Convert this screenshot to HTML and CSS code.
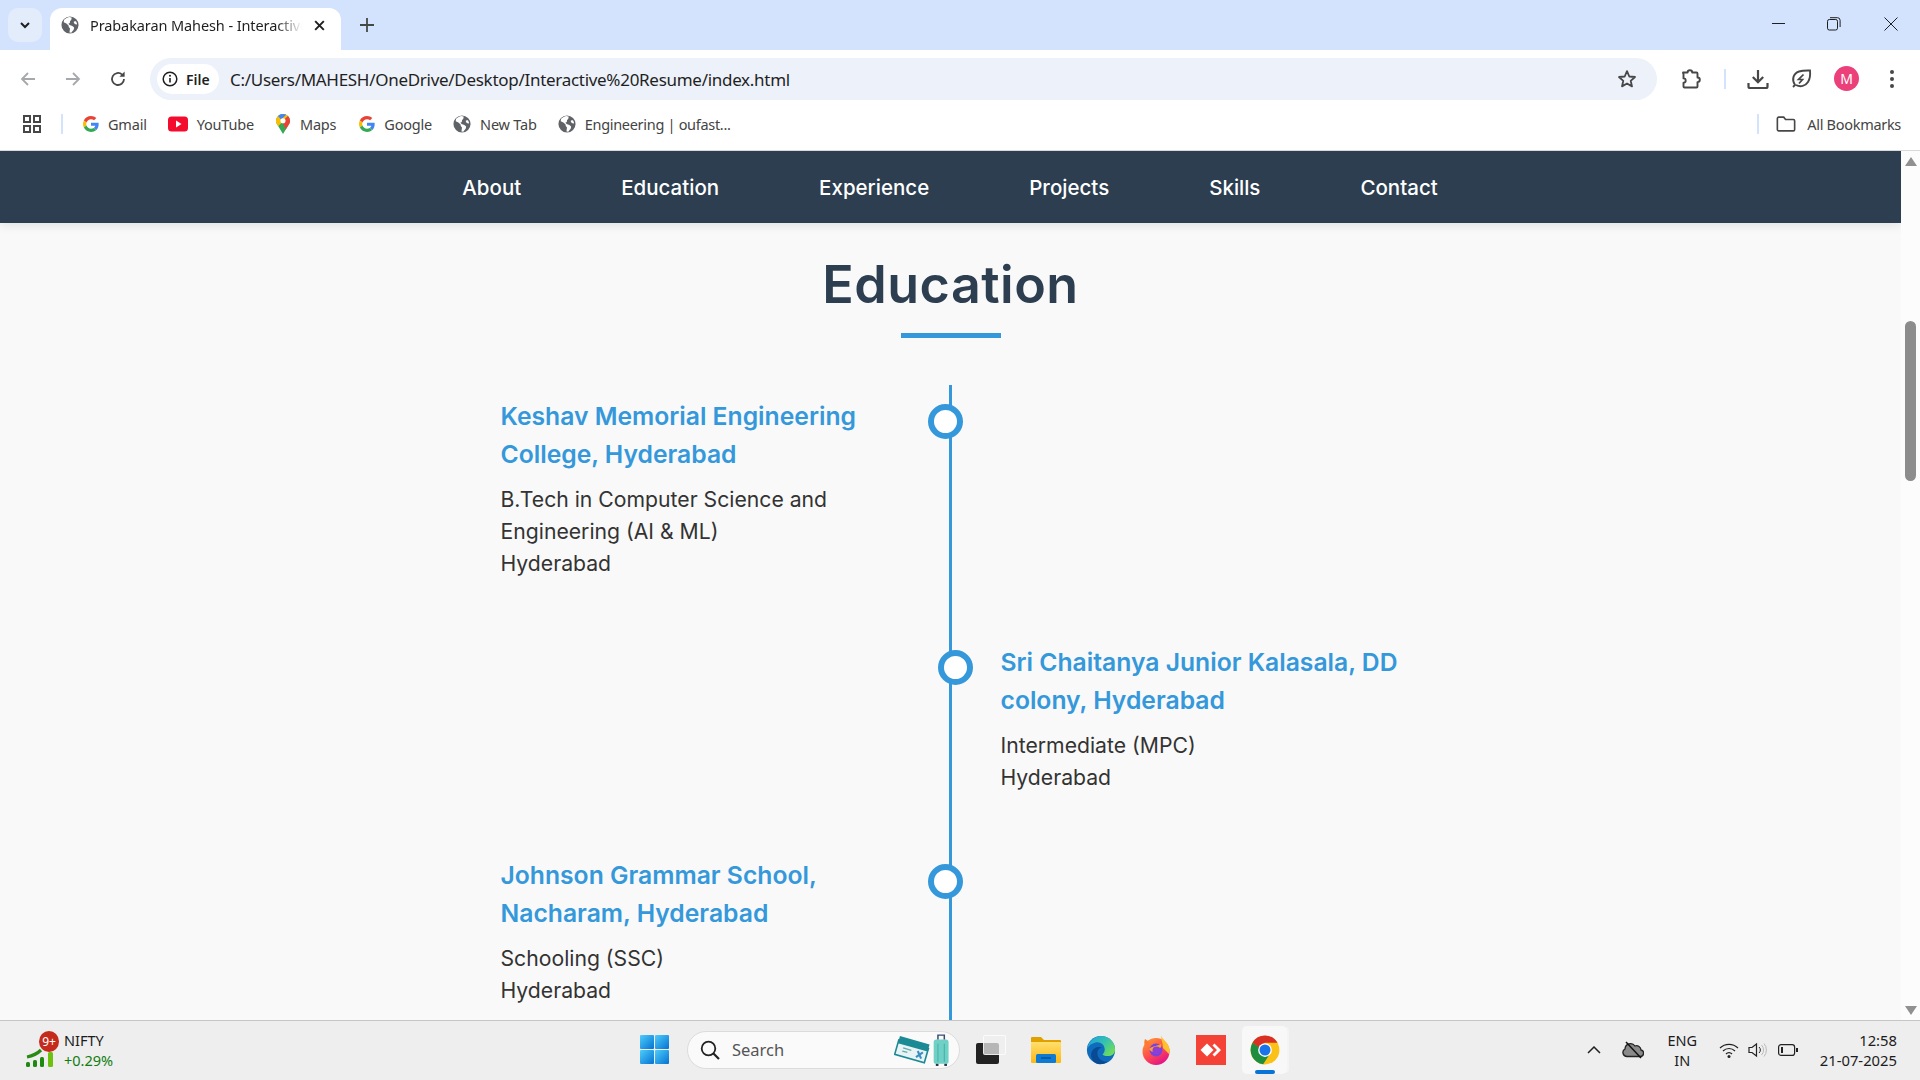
FILE: index.html
```html
<!DOCTYPE html>
<html lang="en">
<head>
<meta charset="utf-8">
<title>Prabakaran Mahesh - Interactive Resume</title>
<link rel="stylesheet" href="styles.css">
</head>
<body>
<svg class="defs" width="0" height="0" aria-hidden="true">
  <defs>
    <symbol id="globe" viewBox="0 0 20 20">
      <circle cx="10" cy="10" r="9.5" fill="#5f6368"/>
      <path d="M9 1.2 6.2 2.2 3.4 4.2 3 7l3 1.2 2.4 2.3.2 1.8 1.4 1.5-.6 4.6 2 .3 2.8-3.6.4-2.2-2-1.8-3-1-1.4-1.4 1.6-1 .2-1.8L11.6 4l.2-2.4z" fill="#fff"/>
      <path d="M15.6 5.6l-1.6 1.2.8 1.6 2.2 1.4.8-1.2-.8-2.2z" fill="#fff"/>
    </symbol>
    <symbol id="gicon" viewBox="0 0 48 48">
      <path fill="#EA4335" d="M24 9.5c3.54 0 6.71 1.22 9.21 3.6l6.85-6.85C35.9 2.38 30.47 0 24 0 14.62 0 6.51 5.38 2.56 13.22l7.98 6.19C12.43 13.72 17.74 9.5 24 9.5z"/>
      <path fill="#4285F4" d="M46.98 24.55c0-1.57-.15-3.09-.38-4.55H24v9.02h12.94c-.58 2.96-2.26 5.48-4.78 7.18l7.73 6c4.51-4.18 7.09-10.36 7.09-17.65z"/>
      <path fill="#FBBC05" d="M10.53 28.59c-.48-1.45-.76-2.99-.76-4.59s.27-3.14.76-4.59l-7.98-6.19C.92 16.46 0 20.12 0 24c0 3.88.92 7.54 2.56 10.78l7.97-6.19z"/>
      <path fill="#34A853" d="M24 48c6.48 0 11.93-2.13 15.89-5.81l-7.73-6c-2.15 1.45-4.92 2.3-8.16 2.3-6.26 0-11.57-4.22-13.47-9.91l-7.98 6.19C6.51 42.62 14.62 48 24 48z"/>
    </symbol>
    <symbol id="chrome" viewBox="0 0 48 48">
      <circle cx="24" cy="24" r="23" fill="#fbc116"/>
      <path d="M4 12.500 24 24l6 9-9 13.800A23 23 0 0 1 4 12.500z" fill="#1e8e3e"/>
      <path d="M4 12.500A23 23 0 0 1 44 12.500H24L14 19z" fill="#d93025"/>
      <circle cx="24" cy="24" r="11" fill="#fff"/>
      <circle cx="24" cy="24" r="8.800" fill="#1a73e8"/>
    </symbol>
    <linearGradient id="edgeTop" x1="0" y1="0" x2="1" y2=".7">
      <stop offset="0" stop-color="#1b9de2"/><stop offset=".55" stop-color="#35c1b1"/><stop offset="1" stop-color="#6fdc5c"/>
    </linearGradient>
    <linearGradient id="winBlue" x1="0" y1="0" x2="1" y2="1">
      <stop offset="0" stop-color="#4fcdfb"/><stop offset="1" stop-color="#0472d2"/>
    </linearGradient>
    <linearGradient id="foxOuter" x1="0" y1="0" x2=".6" y2="1">
      <stop offset="0" stop-color="#ffa42a"/><stop offset=".6" stop-color="#ff4a4f"/><stop offset="1" stop-color="#e31587"/>
    </linearGradient>
    <linearGradient id="folderFill" x1="0" y1="0" x2="0" y2="1">
      <stop offset="0" stop-color="#ffdf6e"/><stop offset="1" stop-color="#fdb813"/>
    </linearGradient>
  </defs>
</svg>

<header class="tabstrip">
  <div class="tabsearch">
    <svg class="ico12" viewBox="0 0 12 12"><path d="M2 4l4 4 4-4" fill="none" stroke="#1f1f1f" stroke-width="2"/></svg>
  </div>
  <div class="tab">
    <svg class="ico18"><use href="#globe"/></svg>
    <span class="tab-title">Prabakaran Mahesh - Interactive</span>
    <svg class="ico12 tab-close" viewBox="0 0 12 12"><path d="M2 2l8 8M10 2l-8 8" stroke="#1f1f1f" stroke-width="1.8"/></svg>
  </div>
  <svg class="newtab" viewBox="0 0 14 14"><path d="M7 0v14M0 7h14" stroke="#444746" stroke-width="1.8"/></svg>
  <div class="winctl">
    <svg class="wc" viewBox="0 0 14 14"><path d="M0 6.5h13" stroke="#1f1f1f" stroke-width="1"/></svg>
    <svg class="wc" viewBox="0 0 14 14"><rect x=".5" y="2.5" width="10" height="10.5" rx="1.8" fill="none" stroke="#1f1f1f"/><path d="M3 .7h7.5a2.6 2.6 0 0 1 2.6 2.6V10" fill="none" stroke="#1f1f1f"/></svg>
    <svg class="wc" viewBox="0 0 14 14"><path d="M.5.5l13 13M13.5.5l-13 13" stroke="#1f1f1f" stroke-width="1"/></svg>
  </div>
</header>

<div class="toolbar">
  <div class="navbtns">
    <svg class="ico18" viewBox="0 0 18 18"><path d="M16 9H3M9 3 3 9l6 6" fill="none" stroke="#a6a8ab" stroke-width="1.8"/></svg>
    <svg class="ico18" viewBox="0 0 18 18"><path d="M2 9h13M9 3l6 6-6 6" fill="none" stroke="#a6a8ab" stroke-width="1.8"/></svg>
    <svg class="ico18" viewBox="0 0 18 18"><path d="M15 9a6 6 0 1 1-1.9-4.4" fill="none" stroke="#474747" stroke-width="1.8"/><path d="M15.6 1.6v5.2h-5.2z" fill="#474747"/></svg>
  </div>
  <div class="omnibox">
    <div class="chip">
      <svg class="ico16" viewBox="0 0 16 16"><circle cx="8" cy="8" r="6.8" fill="none" stroke="#1f1f1f" stroke-width="1.5"/><path d="M8 7v4.4" stroke="#1f1f1f" stroke-width="1.6"/><circle cx="8" cy="4.7" r="1" fill="#1f1f1f"/></svg>
      <span>File</span>
    </div>
    <span class="url">C:/Users/MAHESH/OneDrive/Desktop/Interactive%20Resume/index.html</span>
    <svg class="ico20 star" viewBox="0 0 20 20"><path d="M10 2.2l2.3 5.3 5.7.5-4.3 3.8 1.3 5.6L10 14.5l-5 2.9 1.3-5.6L2 8l5.7-.5z" fill="none" stroke="#474747" stroke-width="1.8" stroke-linejoin="round"/></svg>
  </div>
  <div class="tools">
    <svg class="ico22 puzzle" viewBox="0 0 22 22"><path d="M3 4.5h4.6a2.3 2.3 0 0 1 4.6 0h4.3a1 1 0 0 1 1 1v4a2.3 2.3 0 0 1 0 4.6v4.4a1 1 0 0 1-1 1H4.5a1 1 0 0 1-1-1v-3.700a2.200 2.200 0 0 0 0-4.400V5.500a1 1 0 0 1-.5-1z" fill="none" stroke="#474747" stroke-width="1.9" stroke-linejoin="round"/></svg>
    <span class="vsep"></span>
    <svg class="ico22 dl" viewBox="0 0 22 22"><path d="M11 2v12M5.800 9 11 14.200 16.200 9" fill="none" stroke="#474747" stroke-width="2.200"/><path d="M1.500 15v3.500a1.500 1.500 0 0 0 1.500 1.500h16a1.500 1.500 0 0 0 1.500-1.500V15" fill="none" stroke="#474747" stroke-width="2.200"/></svg>
    <svg class="ico22 leaf" viewBox="0 0 22 22"><path d="M3 19c1-1 1.500-1.500 2-2C1.500 12 3 5.500 9 3.500c4-1.300 9-1 11-1 .3 3 .3 8-2 11.500-2.500 4-7.500 5.500-12 3" fill="none" stroke="#474747" stroke-width="1.900"/><path d="M13.500 6.500 8.500 11.500h4l-3.500 4" fill="none" stroke="#474747" stroke-width="1.700"/></svg>
    <span class="avatar">M</span>
    <svg class="ico22 dots" viewBox="0 0 22 22"><circle cx="11" cy="4" r="2" fill="#474747"/><circle cx="11" cy="11" r="2" fill="#474747"/><circle cx="11" cy="18" r="2" fill="#474747"/></svg>
  </div>
</div>

<nav class="bookmarks">
  <svg class="ico20 apps" viewBox="0 0 20 20"><g fill="none" stroke="#474747" stroke-width="2"><rect x="2" y="2" width="6" height="6"/><rect x="12" y="2" width="6" height="6"/><rect x="2" y="12" width="6" height="6"/><rect x="12" y="12" width="6" height="6"/></g></svg>
  <span class="vsep bm-sep"></span>
  <a class="bm"><svg class="ico16"><use href="#gicon"/></svg>Gmail</a>
  <a class="bm"><svg class="ico20" viewBox="0 0 20 20"><rect y="2.500" width="20" height="15" rx="3.500" fill="#f40c2f"/><path d="M8 6.500v7l5.500-3.500z" fill="#fff"/></svg>YouTube</a>
  <a class="bm bm-maps"><svg class="pin" viewBox="0 0 16 24"><path d="M8 1a7.500 7.500 0 0 1 6 12L8 23 2 13A7.500 7.500 0 0 1 8 1z" fill="#34a853"/><path d="M8 1a7.500 7.500 0 0 1 5.500 2.400L2.800 14.500 2 13A7.500 7.500 0 0 1 2.500 3.400z" fill="#fbbc04"/><path d="M8 1a7.500 7.500 0 0 0-5.500 2.400L6 7l5.500-5.200A7.500 7.500 0 0 0 8 1z" fill="#4285f4"/><path d="M13.500 3.400A7.500 7.500 0 0 1 14 13l-3 5-4-9z" fill="#ea4335"/><circle cx="8" cy="8.500" r="2.800" fill="#fff"/></svg>Maps</a>
  <a class="bm"><svg class="ico16"><use href="#gicon"/></svg>Google</a>
  <a class="bm"><svg class="ico18"><use href="#globe"/></svg>New Tab</a>
  <a class="bm eng"><svg class="ico18"><use href="#globe"/></svg>Engineering | oufast...</a>
  <span class="vsep bm-sep right"></span>
  <a class="bm all"><svg class="ico20 folder" viewBox="0 0 22 18"><path d="M1.500 3a1.500 1.500 0 0 1 1.500-1.500h5.500L10.500 4h8.500a1.500 1.500 0 0 1 1.500 1.500V15a1.500 1.500 0 0 1-1.500 1.500H3A1.500 1.500 0 0 1 1.500 15z" fill="none" stroke="#474747" stroke-width="1.800"/></svg>All Bookmarks</a>
</nav>

<div class="viewport">
  <main class="page">
    <div class="sitenav">
      <a>About</a><a>Education</a><a>Experience</a><a>Projects</a><a>Skills</a><a>Contact</a>
    </div>
    <section class="education">
      <h1 class="heading">Education</h1>
      <div class="underline"></div>
      <div class="timeline">
        <article class="item left first">
          <span class="dot"></span>
          <h2>Keshav Memorial Engineering<br>College, Hyderabad</h2>
          <p>B.Tech in Computer Science and<br>Engineering (AI &amp; ML)<br>Hyderabad</p>
        </article>
        <article class="item right">
          <span class="dot"></span>
          <h2>Sri Chaitanya Junior Kalasala, DD<br>colony, Hyderabad</h2>
          <p>Intermediate (MPC)<br>Hyderabad</p>
        </article>
        <article class="item left last">
          <span class="dot"></span>
          <h2>Johnson Grammar School,<br>Nacharam, Hyderabad</h2>
          <p>Schooling (SSC)<br>Hyderabad</p>
        </article>
      </div>
    </section>
  </main>
  <div class="scrollbar">
    <span class="arrow up"></span>
    <span class="thumb"></span>
    <span class="arrow down"></span>
  </div>
</div>

<footer class="taskbar">
  <div class="widget">
    <span class="widget-ico">
      <svg class="nifty" viewBox="0 0 28 36"><path d="M1 25c5-1 10-3 14-7" fill="none" stroke="#2a8a14" stroke-width="3.200"/><g fill="#1f8a10"><rect x="0" y="30" width="4" height="5" rx="1.500"/><rect x="7" y="28" width="4" height="7" rx="1.500"/><rect x="14" y="25" width="4" height="10" rx="1.500"/></g><rect x="22" y="20" width="5" height="15" rx="1.500" fill="#6cc20f"/></svg>
      <span class="badge">9+</span>
    </span>
    <div class="widget-text"><span>NIFTY</span><span class="up">+0.29%</span></div>
  </div>
  <div class="center">
    <svg class="winlogo" viewBox="0 0 29 29"><g fill="url(#winBlue)"><rect width="14" height="14" rx="1"/><rect x="15" width="14" height="14" rx="1"/><rect y="15" width="14" height="14" rx="1"/><rect x="15" y="15" width="14" height="14" rx="1"/></g></svg>
    <div class="search">
      <svg class="ico20" viewBox="0 0 20 20"><circle cx="8.500" cy="8.500" r="6.800" fill="none" stroke="#222" stroke-width="1.800"/><path d="M13.500 13.500 19 19" stroke="#222" stroke-width="2.200"/></svg>
      <span class="search-text">Search</span>
      <svg class="travel" viewBox="0 0 52 32"><g transform="rotate(16 15 16)"><rect x="2" y="6" width="29" height="12" fill="#1a8a94"/><rect x="2" y="10" width="29" height="14" fill="#e8f3f5" stroke="#1a8a94" stroke-width="1.500"/><rect x="2" y="10" width="29" height="3" fill="#1a8a94"/><path d="M8 16h8M8 19h5" stroke="#6aa" stroke-width="1.200"/><path d="M22 15l5 6M27 15l-5 6" stroke="#3b8fbf" stroke-width="2"/></g><rect x="37" y="6" width="14" height="23" rx="2.500" fill="#6fd0c6"/><path d="M41 6V2h6v4" fill="none" stroke="#3a4a70" stroke-width="1.400"/><path d="M41 10v17M47 10v17" stroke="#48b0a8"/><rect x="39" y="29" width="2.500" height="2" fill="#234"/><rect x="47" y="29" width="2.500" height="2" fill="#234"/></svg>
    </div>
    <span class="taskview"><span class="tv-back"></span><span class="tv-front"></span></span>
    <svg class="app" viewBox="0 0 30 30"><path d="M0 3a1 1 0 0 1 1-1h9l3 3h16a1 1 0 0 1 1 1v4H0z" fill="#e0a000"/><path d="M0 7h29a1 1 0 0 1 1 1v19a1 1 0 0 1-1 1H1a1 1 0 0 1-1-1z" fill="url(#folderFill)"/><rect x="5" y="19" width="20" height="9" rx="1.500" fill="#0f7ad1"/><path d="M10 23h10" stroke="#0a4f99" stroke-width="1.400"/></svg>
    <svg class="app" viewBox="0 0 32 32"><circle cx="16" cy="16" r="15" fill="#0f6cbd"/><path d="M1.500 14C3 6.500 9 1 16 1c9 0 15 7 15 14.500 0 4.700-3.500 7-8 7-3 0-5-1-5.300-2 1.200-1 2.300-2.500 2.300-5 0-5.500-5-8.700-10-7.500-4 1-6.700 3-8.500 6z" fill="url(#edgeTop)"/><path d="M13 31c-6-1.500-9-8-7-13 2-4.500 7-6.500 11-4.500-4 .5-5.500 4-4.500 8 1 4.500 6 7.500 11 6.500-3 2.500-6.500 3.800-10.500 3z" fill="#0a4a94"/></svg>
    <svg class="app" viewBox="0 0 30 30"><circle cx="15" cy="16.500" r="13.500" fill="url(#foxOuter)"/><path d="M20 0c1 4 5 6 7 10 2 3 2 6 1 9l-6-6C22 8 20 5 20 0z" fill="#ffc22e"/><path d="M4 4c-1 2-1 5 0 7l5-2C8 7 6 5 4 4z" fill="#ff7a2f"/><circle cx="15" cy="15" r="6.500" fill="#7542e5"/><path d="M8 14c3-3 8-3 12-5 1 3-1 5-4 5 2 0 2 2 0 3-4 1-7-1-8-3z" fill="#ff9a2e"/><circle cx="15.500" cy="15.500" r="4" fill="#8c3fd1"/></svg>
    <svg class="app" viewBox="0 0 30 30"><rect width="30" height="30" fill="#f44336"/><path d="M11 8.500 17.500 15 11 21.500 4.500 15z" fill="#fff"/><path d="M18.500 8.500 25 15l-6.500 6.500-2-2L21 15l-4.500-4.500z" fill="#fff"/></svg>
    <span class="active-app">
      <svg class="app"><use href="#chrome"/></svg>
      <span class="indicator"></span>
    </span>
  </div>
  <div class="tray">
    <svg class="caret" viewBox="0 0 14 8"><path d="M1 7l6-6 6 6" fill="none" stroke="#222" stroke-width="1.500"/></svg>
    <svg class="ico20 cloud" viewBox="0 0 22 18"><path d="M5 15.500A4 4 0 0 1 3 8a5.500 5.500 0 0 1 10-3 4.500 4.500 0 0 1 6 4 3.300 3.300 0 0 1-1 6.500z" fill="#8a8a8a" stroke="#222" stroke-width="1.300"/><path d="M4 1l15 16" stroke="#111" stroke-width="1.500"/></svg>
    <div class="lang"><span>ENG</span><span>IN</span></div>
    <svg class="ico20 wifi" viewBox="0 0 20 16"><g fill="none" stroke="#222" stroke-width="1.200"><path d="M1 6a13 13 0 0 1 18 0"/><path d="M4 9a8.500 8.500 0 0 1 12 0"/><path d="M7 12a4 4 0 0 1 6 0"/></g><circle cx="10" cy="14.500" r="1.500" fill="#222"/></svg>
    <svg class="ico20 vol" viewBox="0 0 20 16"><path d="M1 5.500h3L8.500 2v12L4 10.500H1z" fill="none" stroke="#222" stroke-width="1.200"/><path d="M11 5a4 4 0 0 1 0 6" fill="none" stroke="#222"/><path d="M13.500 3a7 7 0 0 1 0 10M16 1.500a10 10 0 0 1 0 13" fill="none" stroke="#bbb"/></svg>
    <svg class="ico20 batt" viewBox="0 0 20 12"><rect x=".6" y=".6" width="16" height="10.800" rx="2.500" fill="none" stroke="#222" stroke-width="1.200"/><rect x="3" y="3" width="2" height="6" fill="#222"/><rect x="18" y="4" width="2" height="4" fill="#222"/></svg>
    <div class="clock"><span>12:58</span><span>21-07-2025</span></div>
  </div>
</footer>
</body>
</html>
```
FILE: styles.css
```css
* { box-sizing: border-box; }
html, body { margin: 0; height: 100%; overflow: hidden; }
body {
  display: flex;
  flex-direction: column;
  height: 100vh;
  font-family: "Noto Sans", "Open Sans", sans-serif;
  color: #1f1f1f;
  background: #fff;
}
.defs { position: absolute; }
svg { flex: none; display: block; }
.ico12 { width: 12px; height: 12px; }
.ico16 { width: 16px; height: 16px; }
.ico18 { width: 18px; height: 18px; }
.ico20 { width: 20px; height: 20px; }
.ico22 { width: 22px; height: 22px; }

/* tab strip */
.tabstrip {
  height: 50px;
  flex: none;
  background: #d3e3fd;
  display: flex;
  align-items: flex-end;
  padding-left: 8px;
}
.tabsearch {
  width: 34px;
  height: 34px;
  margin-bottom: 8px;
  border-radius: 10px;
  background: #e3ecfb;
  display: flex;
  align-items: center;
  justify-content: center;
}
.tab {
  width: 291px;
  height: 42px;
  margin-left: 8px;
  background: #fff;
  border-radius: 12px 12px 0 0;
  display: flex;
  align-items: center;
  padding: 0 15px 8px 11px;
  gap: 11px;
}
.tab-title {
  flex: 1;
  min-width: 0;
  white-space: nowrap;
  font-size: 14.5px;
  letter-spacing: -.1px;
  -webkit-mask-image: linear-gradient(to right, #000 88%, transparent);
  mask-image: linear-gradient(to right, #000 88%, transparent);
}
.tab-close { width: 13px; height: 13px; }
.newtab { width: 14px; height: 14px; margin: 0 0 18px 19px; }
.winctl {
  margin-left: auto;
  display: flex;
  align-items: center;
  gap: 43px;
  padding: 0 22px 19px 0;
}
.wc { width: 14px; height: 14px; }
.wc:first-child { margin-right: -2px; }

/* toolbar */
.toolbar {
  height: 50px;
  flex: none;
  display: flex;
  align-items: flex-start;
  padding: 8px 0 0 19px;
}
.navbtns {
  display: flex;
  gap: 27px;
  padding-top: 12px;
  width: 131px;
}
.omnibox {
  width: 1507px;
  height: 42px;
  background: #ecf1fa;
  border-radius: 21px;
  display: flex;
  align-items: center;
  padding: 0 20px 0 7px;
}
.chip {
  width: 62px;
  height: 30px;
  background: #fff;
  border-radius: 15px;
  display: flex;
  align-items: center;
  gap: 8px;
  padding-left: 5px;
  font-size: 14px;
  font-weight: 600;
}
.url {
  margin-left: 11px;
  flex: 1;
  font-size: 17px;
  letter-spacing: -.29px;
  white-space: nowrap;
}
.tools {
  display: flex;
  align-items: center;
  height: 42px;
  padding-left: 23px;
}
.vsep {
  display: block;
  width: 2px;
  height: 20px;
  background: #d3e3fd;
  flex: none;
}
.tools .vsep { margin: 0 21px 0 22px; }
.leaf { margin-left: 21px; }
.avatar {
  width: 25px;
  height: 25px;
  margin: 0 0 2px 22px;
  border-radius: 50%;
  background: #ec407a;
  color: #fff;
  font-size: 14px;
  display: flex;
  align-items: center;
  justify-content: center;
}
.dots { margin-left: 22px; }

/* bookmarks */
.bookmarks {
  height: 51px;
  flex: none;
  display: flex;
  align-items: center;
  padding: 0 19px 2px 22px;
  border-bottom: 1px solid #d9d9d9;
  font-size: 14.5px;
  color: #444;
}
.bm-sep { margin: 0 20px 0 19px; }
.bm-sep.right { margin: 0 17px 0 auto; }
.bm {
  display: flex;
  align-items: center;
  gap: 9px;
  margin-right: 21px;
  white-space: nowrap;
  letter-spacing: -.2px;
}
.bm-maps { margin-right: 23px; }
.eng { letter-spacing: -.3px; }
.pin { width: 16px; height: 22px; }
.bm.all { margin: 0; gap: 11px; letter-spacing: -.3px; }
.folder { width: 20px; height: 18px; }

/* page */
.viewport { flex: 1; min-height: 0; display: flex; }
.page {
  flex: 1;
  min-width: 0;
  background: #f9f9f9;
  overflow: hidden;
  font-family: Inter, "Noto Sans", sans-serif;
}
.sitenav {
  height: 72px;
  background: #2c3e50;
  box-shadow: 0 2px 10px rgba(0,0,0,.1);
  display: flex;
  align-items: center;
  justify-content: center;
  gap: 100px;
  color: #fff;
  font-size: 20.5px;
  font-weight: 500;
  padding-right: 1px;
}
.education { padding-top: 28px; }
.heading {
  margin: 0;
  height: 68px;
  line-height: 68px;
  text-align: center;
  font-size: 52px;
  letter-spacing: .5px;
  font-weight: 600;
  color: #2c3e50;
}
.underline {
  width: 100px;
  height: 5px;
  margin: 14px auto 47px;
  background: #3498db;
}
.timeline {
  position: relative;
  width: 1000px;
  margin: 0 auto;
  padding-bottom: 200px;
}
.timeline::before {
  content: "";
  position: absolute;
  left: 498.5px;
  top: 0;
  bottom: 0;
  width: 3px;
  background: #3498db;
}
.item {
  position: relative;
  width: 50%;
  padding: 14px 50px 50px 50px;
}
.item.first { padding: 13px 50px 51px 50px; }
.item.right { margin-left: 50%; }
.item h2 {
  margin: 0;
  font-size: 24.7px;
  line-height: 37.5px;
  font-weight: 600;
  color: #3498db;
  white-space: nowrap;
}
.item p {
  margin: 10px 0 0;
  font-size: 21.2px;
  line-height: 32px;
  color: #333;
  white-space: nowrap;
}
.dot {
  position: absolute;
  top: 20px;
  width: 35px;
  height: 35px;
  border-radius: 50%;
  background: #fff;
  border: 6px solid #3498db;
}
.left .dot { right: -12px; }
.right .dot { left: -13px; }
.first .dot { top: 19px; }
.last .dot { top: 21px; }

/* scrollbar */
.scrollbar {
  width: 19px;
  flex: none;
  background: #fcfcfc;
  display: flex;
  flex-direction: column;
  align-items: center;
  padding: 6px 0 5px;
}
.arrow {
  width: 0;
  height: 0;
  border-left: 6px solid transparent;
  border-right: 6px solid transparent;
  flex: none;
}
.arrow.up { border-bottom: 9px solid #909090; }
.arrow.down { border-top: 9px solid #909090; margin-top: auto; }
.thumb {
  width: 11px;
  height: 160px;
  margin-top: 155px;
  background: #8c8c8c;
  border-radius: 6px;
  flex: none;
}

/* taskbar */
.taskbar {
  height: 60px;
  flex: none;
  position: relative;
  background: #eeeeee;
  border-top: 1px solid #c6c6c6;
  display: flex;
  align-items: center;
  font-family: "Noto Sans", "Open Sans", sans-serif;
  color: #1c1c1c;
}
.widget {
  width: 620px;
  padding: 0 0 2px 26px;
  display: flex;
  align-items: center;
  gap: 9px;
  flex: none;
}
.widget-ico { position: relative; width: 29px; height: 36px; display: block; }
.nifty { width: 28px; height: 36px; }
.badge {
  position: absolute;
  top: -1px;
  right: -4px;
  width: 20px;
  height: 21px;
  border-radius: 50%;
  background: #c42b1c;
  color: #fff;
  font-size: 12px;
  line-height: 21px;
  text-align: center;
}
.widget-text {
  display: flex;
  flex-direction: column;
  font-size: 14.5px;
  line-height: 20px;
}
.up { color: #107c10; }
.center {
  display: flex;
  align-items: center;
  flex: none;
  padding: 0 0 2px 20px;
}
.winlogo { width: 29px; height: 29px; }
.search {
  width: 273px;
  height: 38px;
  margin-left: 18px;
  border-radius: 19px;
  background: #fafafa;
  border: 1px solid #dcdcdc;
  display: flex;
  align-items: center;
  padding-left: 12px;
}
.search-text {
  margin-left: 12px;
  font-size: 16.5px;
  color: #555;
}
.travel { width: 56px; height: 34px; margin-left: auto; margin-right: 9px; }
.taskview {
  position: relative;
  display: block;
  width: 30px;
  height: 29px;
  margin-left: 16px;
}
.tv-back {
  position: absolute;
  left: 0;
  bottom: 0;
  width: 23px;
  height: 21px;
  background: #222;
  border-radius: 2px;
}
.tv-front {
  position: absolute;
  right: 0;
  top: 0;
  width: 23px;
  height: 20px;
  background: rgba(240,240,240,.72);
  border: 1px solid rgba(255,255,255,.7);
  border-radius: 2px;
}
.app { width: 30px; height: 30px; margin-left: 25px; }
.active-app {
  position: relative;
  width: 45px;
  height: 48px;
  margin-left: 16px;
  border-radius: 5px;
  background: #f8f8f8;
  box-shadow: 3px 0 0 -1px #f4f4f4;
  display: flex;
  align-items: center;
  justify-content: center;
}
.active-app .app { margin: 0; }
.indicator {
  position: absolute;
  left: 13px;
  bottom: 0;
  width: 20px;
  height: 4px;
  border-radius: 2px;
  background: #0a74d6;
}
.tray {
  margin-left: auto;
  display: flex;
  align-items: center;
  padding: 0 23px 2px 0;
}
.caret { width: 14px; height: 8px; }
.cloud { width: 22px; height: 18px; margin-left: 20.5px; }
.lang {
  width: 40px;
  margin-left: 18.5px;
  display: flex;
  flex-direction: column;
  align-items: center;
  font-size: 14.5px;
  line-height: 20px;
}
.wifi { margin-left: 16.5px; height: 16px; }
.vol { margin-left: 9px; height: 16px; }
.batt { margin-left: 10px; height: 12px; }
.clock {
  margin-left: 22px;
  display: flex;
  flex-direction: column;
  align-items: flex-end;
  font-size: 14.8px;
  line-height: 20px;
}
```
